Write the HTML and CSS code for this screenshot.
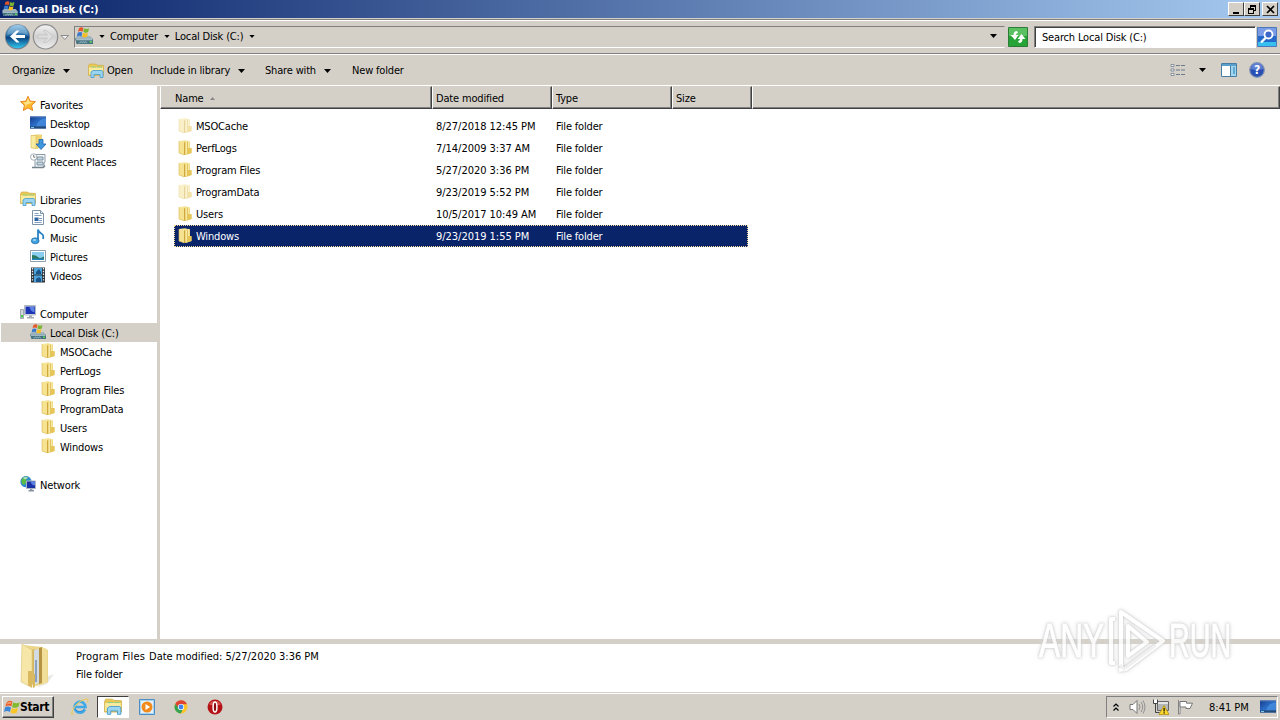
FILE: index.html
```
<!DOCTYPE html>
<html lang="en">
<head>
  <meta charset="UTF-8">
  <title>Local Disk (C:)</title>
  <link rel="stylesheet" href="styles.css">
</head>
<body>

<!-- shared icons -->
<svg class="defs" width="0" height="0">
  <defs>
    <linearGradient id="gold" x1="0" x2="1"><stop offset="0" stop-color="#fbf0b4"/><stop offset="1" stop-color="#e9cb60"/></linearGradient>
    <linearGradient id="blue" x1="0" y1="0" x2="0" y2="1"><stop offset="0" stop-color="#8fc4e8"/><stop offset=".45" stop-color="#2469a4"/><stop offset=".55" stop-color="#0c4480"/><stop offset="1" stop-color="#2fc6ee"/></linearGradient>
    <linearGradient id="silver" x1="0" y1="0" x2="0" y2="1"><stop offset="0" stop-color="#f4f4f4"/><stop offset=".5" stop-color="#cfcfcf"/><stop offset="1" stop-color="#eeeeee"/></linearGradient>
    <linearGradient id="screen" x1="0" y1="0" x2="1" y2="1"><stop offset="0" stop-color="#173a8c"/><stop offset=".5" stop-color="#2c6fc8"/><stop offset="1" stop-color="#1c4fa8"/></linearGradient>
  </defs>
  <symbol id="flag" viewBox="0 0 16 16">
    <path d="M3 3Q6 .5 8.500 2.800L7.300 7.300Q4.500 5.500 1.200 7.500z" fill="#ea5a24"/>
    <path d="M9.300 3.200Q12 5.200 15.800 3.300L14.300 8Q11 9.700 8 7.900z" fill="#7fbb2c"/>
    <path d="M1 8.400Q4 6.700 7 8.500L5.800 13Q3 11.200 0 13z" fill="#3a86d8"/>
    <path d="M7.800 8.900Q10.500 10.700 14 9L12.700 13.800Q9.500 15.500 6.500 13.500z" fill="#fbc526"/>
    <path d="M3.500 3.500Q6 2 7.500 3.200L7 5Q4.500 4.500 3 5.500z" fill="#f69a72"/>
  </symbol>
  <symbol id="disk" viewBox="0 0 16 16">
    <path d="M0 10L2 8h11.500l2.500 2.500v4.500H1.500z" fill="#9fb4bd"/>
    <path d="M0 10l1 .7h15V15H1.500z" fill="#47707f"/>
    <path d="M1 10.800h14.500v1H1z" fill="#b9ced6"/>
    <path d="M3 14h2v-1h1v1h1v-1h1v1h1v-1h1v1h1" stroke="#8fb7c3" fill="none" stroke-width=".7"/>
    <path d="M13 12.500h2V14h-2z" fill="#57d85a"/>
    <path d="M3.500 1Q5.500-.5 7.500.8L6.700 4.200Q4.700 3 2.600 4.300z" fill="#e4572a"/>
    <path d="M8.200 1.100Q10 2.300 12.500 1.100L11.700 4.500Q9.500 5.700 7.400 4.500z" fill="#7ab62f"/>
    <path d="M2.400 5Q4.500 3.800 6.500 5L5.700 8.400Q3.500 7.300 1.600 8.500z" fill="#3779cf"/>
    <path d="M7.200 5.200Q9.500 6.500 11.500 5.200L10.700 8.700Q8.500 9.900 6.400 8.700z" fill="#f5bd21"/>
  </symbol>
  <symbol id="folder" viewBox="0 0 16 16">
    <path d="M2 1L8 .3 13 1.500V8l1.500.5V13L9 15 2 13z" fill="url(#gold)"/>
    <path d="M2 1L7 2.500V15L2 13z" fill="#f6e391"/>
    <path d="M7 2.500L8.500 2V14.500L7 15z" fill="#cfa73c"/>
    <path d="M8.500 1.500L12.500 .8V12.500L8.500 14z" fill="#f8e9a2"/>
    <path d="M10.500 1.500V13.500" stroke="#dcb950" stroke-width=".8"/>
    <path d="M11 8H14.500V13L10 14.500z" fill="#e6c658"/>
    <path d="M2 1V13L7 14.800" stroke="#d9bb58" stroke-width=".6" fill="none"/>
  </symbol>
  <symbol id="libraries" viewBox="0 0 16 16">
    <path d="M.5 3V12.500h15v-10l-7-.5-1-1h-6z" fill="#e9c954" stroke="#cfae48" stroke-width=".7"/>
    <path d="M1 4.500h14v7H1z" fill="#fbeb9c"/>
    <path d="M3 4h5M9 4h5" stroke="#8fce8a"/>
    <path d="M3 14.500V9L5 7.500h9l1 1.500v5.500h-3v-3H6v3z" fill="#9ad4f1" stroke="#459bcb" stroke-width=".8"/>
  </symbol>
  <symbol id="star" viewBox="0 0 16 16">
    <path d="M8 .3L10.200 5.100 15.500 5.700 11.600 9.300 12.700 14.500 8 11.900 3.300 14.500 4.400 9.300.5 5.700 5.800 5.100z" fill="#fdb92e" stroke="#e5801a" stroke-width=".9"/>
    <path d="M8 2L9.500 5.800 13 6.500 7 8.500 4.500 12 5.500 8.800 3 6.500 6.500 5.900z" fill="#ffe48a"/>
  </symbol>
  <symbol id="desktop" viewBox="0 0 16 16">
    <path d="M0 1.500h16v12H0z" fill="url(#screen)"/>
    <path d="M0 1.500h16v1H0z" fill="#4d74b4"/>
    <path d="M6 11.500Q9 3.500 16 3.500V11.500z" fill="#4c94e4" opacity=".7"/>
    <path d="M0 11.500h16v2H0z" fill="#244a76"/>
    <path d="M1 12h3v1H1z" fill="#7ec8e8"/>
  </symbol>
  <symbol id="downloads" viewBox="0 0 16 16">
    <path d="M1 1.500L6 .5h6v12L7 15 1 14z" fill="#efd475"/>
    <path d="M1 1.500h5V14.500L1 13.800z" fill="#f9eba0" stroke="#d8b856" stroke-width=".6"/>
    <path d="M9 5.500h4v4.500h3l-5 5.500L6 10h3z" fill="#3f98dd" stroke="#1f66ad" stroke-width=".8"/>
  </symbol>
  <symbol id="recent" viewBox="0 0 16 16">
    <path d="M5 1.500h10V9l-1 1v4.500H6l-1-1z" fill="#f0f4f6" stroke="#7f919d" stroke-width=".9"/>
    <path d="M7 4h6v3H7zM7 9h6v3H7z" fill="#c4d5df" stroke="#6d8496" stroke-width=".8"/>
    <path d="M2 14.500h11l2-2" stroke="#73848f" fill="none" stroke-width="1.300"/>
    <circle cx="3.700" cy="4" r="3.200" fill="#fff" stroke="#8d9ba5" stroke-width=".8"/>
    <path d="M3.700 2v2.200h1.600" stroke="#555" fill="none" stroke-width=".8"/>
  </symbol>
  <symbol id="document" viewBox="0 0 16 16">
    <path d="M2.500.5h8l3 3v11h-11z" fill="#fff" stroke="#7d93a7"/>
    <path d="M10.500.5v3h3" fill="#dbe5ee" stroke="#7d93a7"/>
    <path d="M4.500 3.500h4M4.500 5.500h7M9 8.500h3M9 10.500h3M4.500 12.500h7" stroke="#7e9fc0"/>
    <path d="M4.500 7.500h4v3.500h-4z" fill="#2d62a0"/>
  </symbol>
  <symbol id="music" viewBox="0 0 16 16">
    <path d="M8 11.500V.5q1 3 3.500 4.200t1.500 5.300" fill="none" stroke="#2a83c5" stroke-width="1.800"/>
    <ellipse cx="5.200" cy="11.800" rx="3.900" ry="3" fill="#3ea1de" stroke="#1a69a8" stroke-width=".7"/>
    <ellipse cx="4.400" cy="11" rx="1.600" ry="1" fill="#a1daf6"/>
  </symbol>
  <symbol id="pictures" viewBox="0 0 16 16">
    <path d="M.5 2.500h15v11H.5z" fill="#fff" stroke="#8da0ad"/>
    <path d="M2 4h12v8H2z" fill="#8acdee"/>
    <path d="M2 7q4 0 6 2t6-.5V12H2z" fill="#2a7a62"/>
    <path d="M2 10.500h12V12H2z" fill="#2580b5"/>
  </symbol>
  <symbol id="video" viewBox="0 0 16 16">
    <path d="M1 .5h14v15H1z" fill="#2b333b"/>
    <path d="M4 1h8v6.500H4zM4 8.500h8V15H4z" fill="#4ba4dc"/>
    <path d="M6 5l3-3 2 3v2H6zM6 12l3-2 2 2v3H6z" fill="#1b5488"/>
    <path d="M2.500 1v14M13.500 1v14" stroke="#eef3f6" stroke-width="1.300" stroke-dasharray="1.400 1.400"/>
  </symbol>
  <symbol id="computer" viewBox="0 0 16 16">
    <path d="M.5 4.500h3v9h-3z" fill="#d3d8dc" stroke="#8d97a0" stroke-width=".8"/>
    <path d="M1 10h2v2.500H1z" fill="#4aca4e"/>
    <path d="M4.500.5h11v9.500h-11z" fill="#dfe5ec" stroke="#b1b9c2"/>
    <path d="M5.500 1.500h9.500v7.500H5.500z" fill="#1c35b4"/>
    <path d="M9.500 2h5v5.500q-4-1-5-5.500z" fill="#5b80e2"/>
    <path d="M9 10.500h3v1.500h2v1.500H7V12h2z" fill="#a3abb4"/>
  </symbol>
  <symbol id="network" viewBox="0 0 16 16">
    <circle cx="6" cy="5.700" r="5.600" fill="#2c88d4"/>
    <path d="M2 3Q5-.5 8 1L6 4 7 6 4 9Q0 7 2 3zM9 3l2 2-1 2z" fill="#5cbb45"/>
    <path d="M3 2q3-2 5 0L5 3.500z" fill="#d7f1f5" opacity=".7"/>
    <path d="M6.500 5h9v7.500h-9z" fill="#1a32a4" stroke="#aeb8c5"/>
    <path d="M10.500 5.500h4.500v4q-3.500 0-4.500-4z" fill="#5b80e2"/>
    <path d="M10 13h2.500v1H14v1.500H8.500V14H10z" fill="#8995a3"/>
  </symbol>
  <symbol id="down" viewBox="0 0 7 4"><path d="M0 0h7L3.500 4z"/></symbol>
</svg>

<div class="window">

  <div class="titlebar">
    <svg class="icon"><use href="#disk"/></svg>
    <span class="title">Local Disk (C:)</span>
    <div class="caption">
      <svg width="16" height="14" class="cap-btn"><path d="M4 9h6v2H4z"/></svg>
      <svg width="16" height="14" class="cap-btn"><path d="M5 2h6v2H5zM5 4h1v1H5zM10 4h1v4h-1zM9 7h2v1H9zM3 5h6v2H3zM3 7h1v4H3zM8 7h1v4H8zM3 10h6v1H3z"/></svg>
      <svg width="16" height="14" class="cap-btn close"><path d="M4 3l7 7M11 3l-7 7" stroke="#000" stroke-width="1.700"/></svg>
    </div>
  </div>

  <div class="navbar">
    <svg class="travel" width="68" height="28" viewBox="0 0 68 28">
      <circle cx="13.500" cy="13.800" r="12.600" fill="#77828e"/>
      <circle cx="13.500" cy="13.500" r="11.700" fill="url(#blue)"/>
      <path d="M3 12a10.500 10 0 0 1 21 0q-10-4-21 0z" fill="#b7d7ec" opacity=".35"/>
      <path d="M6 13.500L12.500 7.500H15.500L11.500 12H21V15H11.500L15.500 19.500H12.500z" fill="#fff"/>
      <circle cx="41.500" cy="13.800" r="12.200" fill="url(#silver)" stroke="#8c8c8c" stroke-width="1.200"/>
      <path d="M49 13.500L42.500 7.500H39.500L43.500 12H34V15H43.500L39.500 19.500H42.500z" fill="#dedede" stroke="#bbb" stroke-width=".6"/>
      <path d="M57 12.500h7.500l-3.700 4z" fill="#eee" stroke="#777" stroke-width=".8"/>
    </svg>
    <div class="address">
      <svg class="disk-big"><use href="#disk"/></svg>
      <svg class="arrow small"><use href="#down"/></svg>
      <span class="crumb crumb-first">Computer</span>
      <svg class="arrow small"><use href="#down"/></svg>
      <span class="crumb">Local Disk (C:)</span>
      <svg class="arrow small"><use href="#down"/></svg>
      <svg class="arrow history"><use href="#down"/></svg>
    </div>
    <svg class="refresh" width="20" height="20" viewBox="0 0 20 20">
      <path d="M.5.500h19v19H.5z" fill="#27a437" stroke="#2c7c38"/>
      <path d="M1 1h18v8H1z" fill="#6cca72" opacity=".75"/>
      <path d="M9 4Q5.500 4 5.500 8H2.500L7 13 10.500 8H8Q8 6 10 6z" fill="#fff"/>
      <path d="M11 16Q14.500 16 14.500 12H17.500L13.500 7 9.500 12H12Q12 14 10 14z" fill="#fff"/>
    </svg>
    <div class="search">Search Local Disk (C:)</div>
    <svg class="search-btn" width="20" height="20" viewBox="0 0 20 20">
      <path d="M.5.500h19v19H.5z" fill="#2468cc" stroke="#4b79ba"/>
      <path d="M1 1h18v8H1z" fill="#7b9be6"/><path d="M1 15h18v4H1z" fill="#37bff0"/>
      <circle cx="11.500" cy="7.500" r="4" fill="#3c66c8" stroke="#fff" stroke-width="1.800"/>
      <path d="M8.500 11L4 15.500" stroke="#fff" stroke-width="2.400"/>
    </svg>
  </div>

  <div class="toolbar">
    <span class="tool organize">Organize <svg class="arrow"><use href="#down"/></svg></span>
    <span class="tool open"><svg class="icon"><use href="#libraries"/></svg>Open</span>
    <span class="tool include">Include in library <svg class="arrow"><use href="#down"/></svg></span>
    <span class="tool share">Share with <svg class="arrow"><use href="#down"/></svg></span>
    <span class="tool">New folder</span>
    <div class="view-tools">
      <svg width="16" height="14" viewBox="0 0 16 14">
        <path d="M1 1.500h3v2H1zM1 6h3v2H1zM1 10.500h3v2H1z" fill="#fff" stroke="#7c8795" stroke-width=".9"/>
        <path d="M6 2.500h4M11 2.500h4M6 7h4M11 7h4M6 11.500h4M11 11.500h4" stroke="#6d7b8b"/>
      </svg>
      <svg class="arrow"><use href="#down"/></svg>
      <svg class="preview" width="16" height="14" viewBox="0 0 16 14">
        <path d="M.5.500h15v13H.5z" fill="#fff" stroke="#477ea5"/>
        <path d="M1 1h14v2H1z" fill="#5a9ecb"/><path d="M10 3h5v10h-5z" fill="#a4d5ef"/><path d="M9.500 3v10.500" stroke="#477ea5"/>
        <path d="M12 4h2v7h-2z" fill="#5daad4"/>
      </svg>
      <svg class="help" width="16" height="16" viewBox="0 0 16 16">
        <circle cx="8" cy="8" r="7.300" fill="#2a4fb4" stroke="#8093b4" stroke-width="1.200"/>
        <path d="M2 7a6 6 0 0 1 12 0q-6 2-12 0z" fill="#7e9ce4" opacity=".6"/>
        <text x="8" y="12.200" text-anchor="middle" class="help-mark">?</text>
      </svg>
    </div>
  </div>

  <div class="content">
    <div class="sidebar">
      <div class="node"><svg class="icon"><use href="#star"/></svg>Favorites</div>
      <div class="node sub"><svg class="icon"><use href="#desktop"/></svg>Desktop</div>
      <div class="node sub"><svg class="icon"><use href="#downloads"/></svg>Downloads</div>
      <div class="node sub"><svg class="icon"><use href="#recent"/></svg>Recent Places</div>
      <div class="node group"><svg class="icon"><use href="#libraries"/></svg>Libraries</div>
      <div class="node sub"><svg class="icon"><use href="#document"/></svg>Documents</div>
      <div class="node sub"><svg class="icon"><use href="#music"/></svg>Music</div>
      <div class="node sub"><svg class="icon"><use href="#pictures"/></svg>Pictures</div>
      <div class="node sub"><svg class="icon"><use href="#video"/></svg>Videos</div>
      <div class="node group"><svg class="icon"><use href="#computer"/></svg>Computer</div>
      <div class="node sub current"><svg class="icon"><use href="#disk"/></svg>Local Disk (C:)</div>
      <div class="node leaf"><svg class="icon"><use href="#folder"/></svg>MSOCache</div>
      <div class="node leaf"><svg class="icon"><use href="#folder"/></svg>PerfLogs</div>
      <div class="node leaf"><svg class="icon"><use href="#folder"/></svg>Program Files</div>
      <div class="node leaf"><svg class="icon"><use href="#folder"/></svg>ProgramData</div>
      <div class="node leaf"><svg class="icon"><use href="#folder"/></svg>Users</div>
      <div class="node leaf"><svg class="icon"><use href="#folder"/></svg>Windows</div>
      <div class="node group"><svg class="icon"><use href="#network"/></svg>Network</div>
    </div>

    <div class="files">
      <div class="head">
        <div class="col col-name">Name <svg width="5" height="3"><path d="M0 3h5L2.500 0z" fill="#888"/></svg></div>
        <div class="col">Date modified</div>
        <div class="col">Type</div>
        <div class="col">Size</div>
        <div class="col"></div>
      </div>
      <div class="rows">
        <div class="row hidden-item"><span class="name"><svg class="icon"><use href="#folder"/></svg>MSOCache</span><span class="date">8/27/2018 12:45 PM</span><span>File folder</span></div>
        <div class="row"><span class="name"><svg class="icon"><use href="#folder"/></svg>PerfLogs</span><span class="date">7/14/2009 3:37 AM</span><span>File folder</span></div>
        <div class="row"><span class="name"><svg class="icon"><use href="#folder"/></svg>Program Files</span><span class="date">5/27/2020 3:36 PM</span><span>File folder</span></div>
        <div class="row hidden-item"><span class="name"><svg class="icon"><use href="#folder"/></svg>ProgramData</span><span class="date">9/23/2019 5:52 PM</span><span>File folder</span></div>
        <div class="row"><span class="name"><svg class="icon"><use href="#folder"/></svg>Users</span><span class="date">10/5/2017 10:49 AM</span><span>File folder</span></div>
        <div class="row selected"><span class="name"><svg class="icon"><use href="#folder"/></svg>Windows</span><span class="date">9/23/2019 1:55 PM</span><span>File folder</span></div>
      </div>
    </div>
  </div>

  <div class="details">
    <svg class="big-folder" width="38" height="46" viewBox="0 0 38 46">
      <path d="M26 34l11-4-7 10-9 3z" fill="#e4e4de" opacity=".8"/>
      <path d="M6 1L25 3 31 6V38L20 42 10 40z" fill="#ecd68c"/>
      <path d="M14 6L18 5V40H13z" fill="#d5b65c"/>
      <path d="M17 6l5-1v34l-5 2z" fill="#d3dbe2"/>
      <path d="M19 16v22" stroke="#7994b5" stroke-width="1.600"/>
      <path d="M22 4l3-1v36l-3 1z" fill="#b69342"/>
      <path d="M25 3.500L30 5V38L25 41z" fill="#f1de98"/>
      <path d="M5 0L15 6V43.500L4 38z" fill="#f6e6a7" stroke="#dfc983" stroke-width=".7"/>
      <path d="M11 27h4v16.500l-4-2zM16 30h2v13l-2 1z" fill="#dab85d"/>
    </svg>
    <div class="info">
      <div class="info-line"><span class="file-name">Program Files</span><span class="meta">Date modified: 5/27/2020 3:36 PM</span></div>
      <div class="info-line">File folder</div>
    </div>
  </div>

  <div class="taskbar">
    <div class="start"><svg width="16" height="18"><use href="#flag"/></svg>Start</div>
    <div class="pinned">
      <svg class="pin" width="18" height="18" viewBox="0 0 18 18">
        <path d="M14 11.500A5.500 5.500 0 1 1 14.500 9H4" fill="none" stroke="#3fa9e8" stroke-width="2.600"/>
        <path d="M13.500 10.500A5.500 5.500 0 0 1 4 11" fill="none" stroke="#1d7dc8" stroke-width=".8"/>
        <path d="M2.500 15.500Q-.5 18 1.500 12.500 6 3 15 1q3-.3 1.500 3.500" fill="none" stroke="#e8c95c" stroke-width="1.100"/>
      </svg>
      <div class="pin active"><svg width="18" height="18"><use href="#libraries"/></svg></div>
      <svg class="pin" width="16" height="16" viewBox="0 0 16 16">
        <path d="M.5.500h15v15H.5z" fill="#a9d4f2" stroke="#4c8dc6"/>
        <path d="M2 2h12v12H2z" fill="#e4f1fa"/>
        <circle cx="8" cy="8" r="5.500" fill="#f28a1c"/><path d="M6.500 5v6l4.500-3z" fill="#fff"/>
      </svg>
      <svg class="pin" width="14" height="14" viewBox="0 0 14 14">
        <circle cx="7" cy="7" r="6.500" fill="#fbc529"/>
        <path d="M1.200 4A6.500 6.500 0 0 1 13 4.200H7L4.500 8.500z" fill="#df4433"/>
        <path d="M1.200 4A6.500 6.500 0 0 0 6.800 13.500L9 9 5 8.500z" fill="#35a352"/>
        <circle cx="7" cy="7" r="3.100" fill="#fff"/><circle cx="7" cy="7" r="2.400" fill="#3f82ee"/>
      </svg>
      <svg class="pin" width="16" height="16" viewBox="0 0 16 16">
        <circle cx="8" cy="8" r="7.500" fill="#b51217"/>
        <path d="M2 5.500a6.500 5.500 0 0 1 12 0q-6 2-12 0z" fill="#e26a64" opacity=".7"/>
        <ellipse cx="8" cy="8" rx="1.900" ry="5" fill="#8b0c10" stroke="#fff" stroke-width="1.500"/>
      </svg>
    </div>
    <div class="tray">
      <svg class="chevrons" width="6" height="8" viewBox="0 0 6 8"><path d="M.5 3.500L3 1l2.500 2.500M.5 7.500L3 5l2.500 2.500" fill="none" stroke="#000" stroke-width="1.200"/></svg>
      <svg class="speaker" width="17" height="16" viewBox="0 0 17 16">
        <path d="M1 5.500h3l4-4v13l-4-4H1z" fill="#fff" stroke="#777"/>
        <path d="M10 5q2 3 0 6M12 3q3.500 5 0 10M14 1.500q4 6.500 0 13" fill="none" stroke="#888" stroke-width=".9"/>
      </svg>
      <svg class="net" width="16" height="16" viewBox="0 0 16 16">
        <path d="M4.500 2.500h11v9h-11z" fill="#b4b7ba" stroke="#666"/><path d="M5 3h10v2H5z" fill="#e5e5e5"/>
        <path d="M.5.500h4v4H.5z" fill="#fff"/>
        <path d="M.5.500v4h4v-4M2.500 4.500v9h4" fill="none" stroke="#444"/>
        <path d="M11 6.500L16 15.500H6z" fill="#ffd92e" stroke="#a98800" stroke-width=".7"/>
        <path d="M10.500 9h1.200v3.500h-1.200zM10.500 13.300h1.200v1.200h-1.200z"/>
      </svg>
      <svg class="action" width="17" height="16" viewBox="0 0 17 16">
        <path d="M1.500 1v14h1.500V2" fill="#fff" stroke="#777" stroke-width=".9"/>
        <path d="M3 2.500h6.500v1.700H15.500L13 9.500H9V8H3z" fill="#fff" stroke="#777"/>
      </svg>
      <span class="clock">8:41 PM</span>
      <svg class="icon"><use href="#desktop"/></svg>
    </div>
  </div>
</div>

<!-- watermark over the window -->
<div class="watermark">
  <span class="mark-word any">ANY</span>
  <svg class="mark-logo" width="60" height="66" viewBox="0 0 60 66">
    <path d="M9 11H5V55H9M13 62L20 61 57 33 15 4V58M22 18V48L41 34z" fill="none" stroke="#fff" stroke-width="4" stroke-linejoin="round"/>
    <path d="M14 57L18 61 50 37" fill="none" stroke="#eee" stroke-width="3"/>
  </svg>
  <span class="mark-word run">RUN</span>
</div>

</body>
</html>
```
FILE: styles.css
```
* { margin: 0; padding: 0; box-sizing: border-box; }
body {
  width: 1280px;
  height: 720px;
  overflow: hidden;
  font-family: 'DejaVu Sans Condensed', 'DejaVu Sans', sans-serif;
  font-stretch: condensed;
  font-size: 11px;
  letter-spacing: -0.17px;
  color: #000;
  background: #d4d0c8;
  white-space: nowrap;
}
svg { display: block; flex: none; }
.defs { position: absolute; }
.icon { width: 16px; height: 16px; }
.arrow { width: 7px; height: 4px; }
.window {
  height: 720px;
  display: flex;
  flex-direction: column;
}

/* title bar */
.titlebar {
  height: 18px;
  padding-left: 2px;
  display: flex;
  align-items: center;
  background: linear-gradient(to right, #0a246a, #a6caf0);
  color: #fff;
}
.title {
  margin-left: 1px;
  font-weight: bold;
  letter-spacing: -0.05px;
}
.caption {
  display: flex;
  margin-left: auto;
  padding-right: 2px;
}
.cap-btn {
  background: #d4d0c8;
  border: 1px solid;
  border-color: #fff #404040 #404040 #fff;
}
.close { margin-left: 2px; }

/* address and search */
.navbar {
  height: 36px;
  display: flex;
  align-items: center;
  border-top: 1px solid #d4d0c8;
  border-bottom: 1px solid #808080;
  box-shadow: inset 0 1px #808080, inset 0 2px #fff, 0 1px #fff;
  padding: 2px 2px 0 4px;
}
.address {
  width: 931px;
  height: 22px;
  margin-left: 2px;
  padding-bottom: 2px;
  display: flex;
  align-items: center;
  border: 1px solid;
  border-color: #808080 #d4d0c8 #fff #808080;
}
.disk-big { width: 18px; height: 18px; }
.small { width: 6px; height: 3px; }
.disk-big + .small { margin-left: 6px; }
.crumb { margin: 0 6px 0 5px; }
.crumb-first { margin: 0 6px 0 5px; }
.history { margin-left: auto; margin-right: 7px; }
.refresh { margin-left: 3px; }
.search {
  width: 222px;
  height: 22px;
  margin: 0 1px 0 6px;
  padding-left: 7px;
  line-height: 21px;
  background: #fff;
  border: 1px solid;
  border-color: #808080 #fff #fff #808080;
  box-shadow: inset 1px 1px #404040;
}

/* command bar */
.toolbar {
  height: 32px;
  padding: 1px 15px 0 12px;
  display: flex;
  align-items: center;
  border-bottom: 1px solid #fff;
}
.tool {
  padding-top: 1px;
  display: flex;
  align-items: center;
}
.tool .arrow { margin-left: 8px; }
.tool .icon { margin-right: 3px; }
.organize { width: 76px; }
.open { width: 62px; }
.include { width: 115px; }
.share { width: 87px; }
.view-tools {
  margin-left: auto;
  display: flex;
  align-items: center;
}
.view-tools .arrow { margin-left: 13px; }
.preview { margin-left: 15px; }
.help { margin-left: 12px; }
.help-mark {
  font-size: 12px;
  font-weight: bold;
  fill: #fff;
}

/* folder tree */
.content {
  height: 553px;
  display: flex;
  background: #fff;
}
.sidebar {
  width: 160px;
  padding-top: 9px;
  border-right: 3px solid #d4d0c8;
}
.node {
  height: 19px;
  margin-left: 1px;
  padding: 1px 0 0 19px;
  display: flex;
  align-items: center;
}
.node .icon { margin: 0 4px 2px 0; }
.sub { padding-left: 29px; }
.leaf { padding-left: 39px; }
.group { margin-top: 19px; }
.current { background: #d4d0c8; }

/* file list */
.files { flex: 1; }
.head {
  height: 23px;
  display: grid;
  grid-template-columns: 272px 120px 120px 80px 1fr;
}
.col {
  padding: 1px 0 0 3px;
  display: flex;
  align-items: center;
  background: #d4d0c8;
  border: 1px solid;
  border-color: #d4d0c8 #404040 #404040 #fff;
  box-shadow: inset -1px -1px #808080;
}
.col-name { padding-left: 14px; }
.col-name svg { margin-left: 6px; }
.rows { padding: 6px 0 0 14px; }
.row {
  width: 574px;
  height: 22px;
  display: grid;
  grid-template-columns: 262px 120px 1fr;
  align-items: center;
}
.name {
  display: flex;
  align-items: center;
  padding-left: 3px;
}
.name .icon { margin-right: 3px; }
.date { letter-spacing: -0.03px; }
.hidden-item .icon { opacity: 0.5; }
.selected {
  background: #0a246a;
  color: #fff;
  outline: 1px dotted #f5db95;
  outline-offset: -1px;
}

/* details pane */
.details {
  height: 53px;
  display: flex;
  background: #fff;
  border-top: 5px solid #d4d0c8;
}
.big-folder { margin-left: 17px; }
.info { margin-left: 21px; padding-top: 4px; }
.info-line { height: 18px; line-height: 18px; }
.file-name { margin-right: 4px; letter-spacing: 0.2px; }
.meta { letter-spacing: -0.02px; }

/* taskbar */
.taskbar {
  height: 28px;
  padding: 3px 2px 2px;
  display: flex;
  align-items: center;
  background: #d4d0c8;
  box-shadow: inset 0 1px #d4d0c8, inset 0 2px #fff;
}
.start {
  width: 52px;
  height: 22px;
  padding-left: 1px;
  display: flex;
  align-items: center;
  border: 1px solid;
  border-color: #fff #404040 #404040 #fff;
  box-shadow: inset -1px -1px #808080;
  font-size: 12px;
  font-weight: bold;
  letter-spacing: -0.3px;
}
.pinned {
  display: flex;
  align-items: center;
  margin-left: 17px;
}
.active {
  width: 32px;
  height: 22px;
  margin: 0 10px 0 8px;
  display: flex;
  align-items: center;
  justify-content: center;
  background: #fff;
  border: 1px solid;
  border-color: #404040 #fff #fff #404040;
}
.active ~ .pin { margin-right: 19px; }
.tray {
  width: 172px;
  height: 22px;
  margin-left: auto;
  padding-left: 6px;
  display: flex;
  align-items: center;
  border: 1px solid;
  border-color: #808080 #fff #fff #808080;
}
.speaker { margin-left: 10px; }
.net { margin-left: 7px; }
.action { margin-left: 8px; }
.clock { width: 51px; margin-left: 15px; padding-top: 1px; letter-spacing: 0; }

/* watermark */
.watermark {
  position: absolute;
  left: 1039px;
  top: 607px;
  display: flex;
  align-items: center;
  filter: drop-shadow(0 0 1px #bbb) drop-shadow(0 0 2px #ddd);
  opacity: 0.85;
}
.mark-logo { margin-right: 3px; }
.mark-word {
  width: 67px;
  font-family: 'Liberation Sans', sans-serif;
  font-size: 48px;
  line-height: 68px;
  letter-spacing: 0;
  color: #fff;
  -webkit-text-stroke: 1px #fff;
  transform: scaleX(0.66);
  transform-origin: left;
}
.run { width: 62px; transform: scaleX(0.6); }
```
